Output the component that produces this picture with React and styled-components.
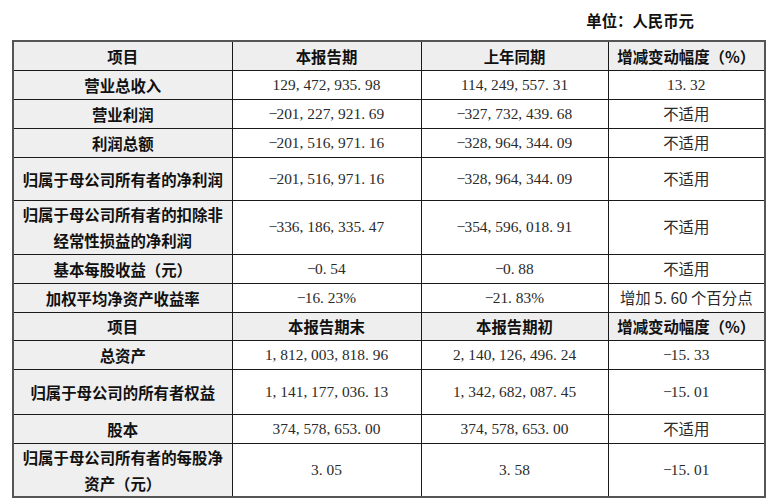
import React from "react";
import styled, { createGlobalStyle } from "styled-components";

const Global = createGlobalStyle`
  html, body { margin: 0; padding: 0; background: #ffffff; }
  body { font-family: "Liberation Serif", "Noto Sans CJK SC", serif; color: #111; }
`;

const Page = styled.div`
  width: 768px;
  height: 500px;
  padding-left: 12px;
  box-sizing: border-box;
`;

const Unit = styled.div`
  height: 40px;
  line-height: 40px;
  text-align: right;
  padding-right: 74px;
  font-family: "Noto Sans CJK SC", sans-serif;
  font-weight: 700;
  font-size: 15.4px;
  color: #111;
`;

const Table = styled.table`
  border-collapse: collapse;
  table-layout: fixed;
  width: 752px;
  border: 2px solid #555;
`;

const Row = styled.tr`
  height: ${(p) => p.$h}px;
`;

const Cell = styled.td`
  border: 1px solid #1a1a1a;
  padding: 0 6px;
  text-align: center;
  vertical-align: middle;
  font-size: 15.4px;
  line-height: 26px;
  white-space: nowrap;
`;

const HeadCell = styled(Cell)`
  background: #eeeeee;
  font-family: "Noto Sans CJK SC", sans-serif;
  font-weight: 700;
  color: #111;
`;

const LabelCell = styled(Cell)`
  background: #efefef;
  font-family: "Noto Sans CJK SC", sans-serif;
  font-weight: 700;
  color: #111;
`;

const ValueCell = styled(Cell)`
  background: #ffffff;
  font-family: "Liberation Serif", "Noto Sans CJK SC", serif;
  font-weight: 400;
  color: #2a2a2a;
`;

const TextValue = styled.span`
  font-family: "Noto Sans CJK SC", sans-serif;
  font-weight: 400;
  color: #2a2a2a;
`;

const Punct = styled.span`
  display: inline-block;
  width: 0.5em;
  text-align: ${(p) => (p.$center ? "center" : "left")};
`;

function Num({ children }) {
  const s = String(children);
  return (
    <>
      {s.split("").map((ch, i) =>
        ch === "," || ch === "." ? (
          <Punct key={i}>{ch}</Punct>
        ) : ch === "-" ? (
          <Punct key={i} $center>
            −
          </Punct>
        ) : (
          <React.Fragment key={i}>{ch}</React.Fragment>
        )
      )}
    </>
  );
}

function Value({ v }) {
  if (/[\u4e00-\u9fff]/.test(v)) {
    if (v.startsWith("增加")) {
      return (
        <TextValue>
          增加 <Num>5.60</Num> 个百分点
        </TextValue>
      );
    }
    return <TextValue>{v}</TextValue>;
  }
  return <Num>{v}</Num>;
}

const cols = [219, 189, 187, 157];

const rows = [
  { type: "head", h: 29, cells: ["项目", "本报告期", "上年同期", "增减变动幅度（%）"] },
  { h: 29, cells: ["营业总收入", "129,472,935.98", "114,249,557.31", "13.32"] },
  { h: 29, cells: ["营业利润", "-201,227,921.69", "-327,732,439.68", "不适用"] },
  { h: 29, cells: ["利润总额", "-201,516,971.16", "-328,964,344.09", "不适用"] },
  { h: 43, cells: ["归属于母公司所有者的净利润", "-201,516,971.16", "-328,964,344.09", "不适用"] },
  { h: 54, cells: [["归属于母公司所有者的扣除非", "经常性损益的净利润"], "-336,186,335.47", "-354,596,018.91", "不适用"] },
  { h: 29, cells: ["基本每股收益（元）", "-0.54", "-0.88", "不适用"] },
  { h: 29, cells: ["加权平均净资产收益率", "-16.23%", "-21.83%", "增加 5.60 个百分点"] },
  { type: "head", h: 28, cells: ["项目", "本报告期末", "本报告期初", "增减变动幅度（%）"] },
  { h: 29, cells: ["总资产", "1,812,003,818.96", "2,140,126,496.24", "-15.33"] },
  { h: 45, cells: ["归属于母公司的所有者权益", "1,141,177,036.13", "1,342,682,087.45", "-15.01"] },
  { h: 28, cells: ["股本", "374,578,653.00", "374,578,653.00", "不适用"] },
  { h: 52, cells: [["归属于母公司所有者的每股净", "资产（元）"], "3.05", "3.58", "-15.01"] },
];

function Label({ v }) {
  if (Array.isArray(v)) {
    return (
      <>
        {v[0]}
        <br />
        {v[1]}
      </>
    );
  }
  return v;
}

export default function App() {
  return (
    <Page>
      <Global />
      <Unit>单位：人民币元</Unit>
      <Table>
        <colgroup>
          {cols.map((w, i) => (
            <col key={i} style={{ width: w }} />
          ))}
        </colgroup>
        <tbody>
          {rows.map((r, i) => (
            <Row key={i} $h={r.h}>
              {r.type === "head"
                ? r.cells.map((c, j) => <HeadCell key={j}>{c}</HeadCell>)
                : r.cells.map((c, j) =>
                    j === 0 ? (
                      <LabelCell key={j}>
                        <Label v={c} />
                      </LabelCell>
                    ) : (
                      <ValueCell key={j}>
                        <Value v={c} />
                      </ValueCell>
                    )
                  )}
            </Row>
          ))}
        </tbody>
      </Table>
    </Page>
  );
}
